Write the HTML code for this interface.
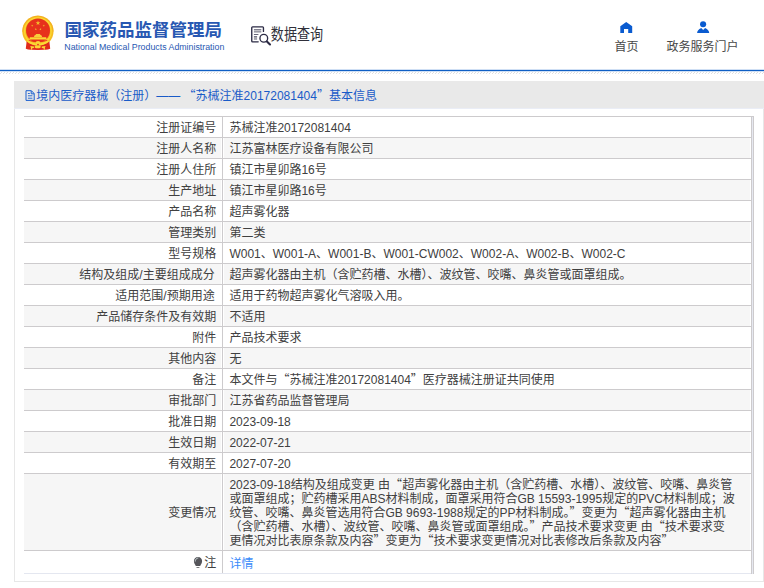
<!DOCTYPE html>
<html lang="zh-CN">
<head>
<meta charset="utf-8">
<title>国家药品监督管理局 - 数据查询</title>
<style>
html,body{margin:0;padding:0;background:#fff}
body{position:relative;width:764px;height:588px;overflow:hidden;font-family:"Liberation Sans",sans-serif;font-size:12px;line-height:14px;color:#333}
div,span,a,h1,h2,p,svg{position:absolute;box-sizing:border-box;display:block;margin:0;padding:0}
.t{color:transparent;white-space:pre;overflow:hidden;font-size:12px;line-height:14px;font-weight:normal;text-decoration:none}
#hd{left:0;top:0;width:764px;height:69px;background:#fff}
#hd h1{left:64.5px;top:18px;width:158px;height:22px;font-size:18px;line-height:22px;font-weight:bold}
#hd p{left:64.3px;top:41px;width:160px;height:11px;font-size:9px;line-height:11px}
#hd .q{left:271px;top:24px;width:52px;height:19px;font-size:13px;line-height:19px}
#hd .n1{left:614px;top:39px;width:24px;height:14px}
#hd .n2{left:666px;top:39px;width:72px;height:14px}
.hl1{left:0;top:69px;width:764px;height:3px;background:linear-gradient(#cfdff4 0,#cfdff4 1px,#0f5fc4 1px,#0f5fc4 2px,#d0e0f4 2px,#d0e0f4 3px)}
.hatch{left:0;top:72px;width:764px;height:2px;background:repeating-linear-gradient(135deg,#fff 0,#fff 1.4px,#e0e0e0 1.4px,#e0e0e0 2.12px)}
.bar{left:14px;top:81px;width:750px;height:28px;background:#e9e9e9;border-bottom:1px solid #eaedf6}
.bar h2{left:22px;top:8px;width:346px;height:14px}
.box{left:14px;top:109px;width:750px;height:473px;background:#fff;border:1px solid #e7e7e7;border-top:0}
.tb{left:24px;top:116px;width:730px;height:458px;background:#fff}
.r{left:0;width:728px;height:21px;border-top:1px solid #cdcbcd;background:linear-gradient(90deg,#fff 0,#fff 198px,#cdcbcd 198px,#cdcbcd 199px,#fff 199px)}
.r.g{background:linear-gradient(90deg,#f6f6f6 0,#f6f6f6 197px,#fff 197px,#fff 198px,#cdcbcd 198px,#cdcbcd 199px,#fff 199px,#fff 200px,#f6f6f6 200px,#f6f6f6 726px,#fff 726px)}
.l{left:0;top:3px;width:193px;text-align:right}
.v{left:205px;top:3px;width:520px}
.e1{left:727px;top:0;width:1px;height:458px;background:#cdcbcd}
.e2{left:728px;top:1px;width:1px;height:457px;background:#e6e8f0}
.e3{left:729px;top:0;width:1px;height:458px;background:#cdcbcd}
.top{left:0;top:0;width:730px;height:1px;background:#cdcbcd}
.bot{left:0;top:457px;width:728px;height:1px;background:#e4e7f0}
#ink{left:0;top:0;pointer-events:none}
</style>
</head>
<body>
<div id="hd">
<h1 class="t">国家药品监督管理局</h1>
<p class="t">National Medical Products Administration</p>
<a class="t q">数据查询</a>
<a class="t n1">首页</a>
<a class="t n2">政务服务门户</a>
</div>
<div class="hl1"></div>
<div class="hatch"></div>
<div class="bar"><h2 class="t">境内医疗器械（注册）—— “苏械注准20172081404”基本信息</h2></div>
<div class="box"></div>
<div class="tb">
<div class="r" style="top:0px;height:21px"><span class="t l" style="top:3px">注册证编号</span><span class="t v">苏械注准20172081404</span></div>
<div class="r g" style="top:21px;height:21px"><span class="t l" style="top:3px">注册人名称</span><span class="t v">江苏富林医疗设备有限公司</span></div>
<div class="r" style="top:42px;height:21px"><span class="t l" style="top:3px">注册人住所</span><span class="t v">镇江市星卯路16号</span></div>
<div class="r g" style="top:63px;height:21px"><span class="t l" style="top:3px">生产地址</span><span class="t v">镇江市星卯路16号</span></div>
<div class="r" style="top:84px;height:21px"><span class="t l" style="top:3px">产品名称</span><span class="t v">超声雾化器</span></div>
<div class="r g" style="top:105px;height:21px"><span class="t l" style="top:3px">管理类别</span><span class="t v">第二类</span></div>
<div class="r" style="top:126px;height:21px"><span class="t l" style="top:3px">型号规格</span><span class="t v">W001、W001-A、W001-B、W001-CW002、W002-A、W002-B、W002-C</span></div>
<div class="r g" style="top:147px;height:21px"><span class="t l" style="top:3px">结构及组成/主要组成成分</span><span class="t v">超声雾化器由主机（含贮药槽、水槽）、波纹管、咬嘴、鼻炎管或面罩组成。</span></div>
<div class="r" style="top:168px;height:21px"><span class="t l" style="top:3px">适用范围/预期用途</span><span class="t v">适用于药物超声雾化气溶吸入用。</span></div>
<div class="r g" style="top:189px;height:21px"><span class="t l" style="top:3px">产品储存条件及有效期</span><span class="t v">不适用</span></div>
<div class="r" style="top:210px;height:21px"><span class="t l" style="top:3px">附件</span><span class="t v">产品技术要求</span></div>
<div class="r g" style="top:231px;height:21px"><span class="t l" style="top:3px">其他内容</span><span class="t v">无</span></div>
<div class="r" style="top:252px;height:21px"><span class="t l" style="top:3px">备注</span><span class="t v">本文件与“苏械注准20172081404”医疗器械注册证共同使用</span></div>
<div class="r g" style="top:273px;height:21px"><span class="t l" style="top:3px">审批部门</span><span class="t v">江苏省药品监督管理局</span></div>
<div class="r" style="top:294px;height:21px"><span class="t l" style="top:3px">批准日期</span><span class="t v">2023-09-18</span></div>
<div class="r g" style="top:315px;height:21px"><span class="t l" style="top:3px">生效日期</span><span class="t v">2022-07-21</span></div>
<div class="r" style="top:336px;height:21px"><span class="t l" style="top:3px">有效期至</span><span class="t v">2027-07-20</span></div>
<div class="r g" style="top:357px;height:77px"><span class="t l" style="top:31px">变更情况</span><span class="t v">2023-09-18结构及组成变更 由“超声雾化器由主机（含贮药槽、水槽）、波纹管、咬嘴、鼻炎管<br>或面罩组成；贮药槽采用ABS材料制成，面罩采用符合GB 15593-1995规定的PVC材料制成；波<br>纹管、咬嘴、鼻炎管选用符合GB 9693-1988规定的PP材料制成。”变更为“超声雾化器由主机<br>（含贮药槽、水槽）、波纹管、咬嘴、鼻炎管或面罩组成。”产品技术要求变更 由“技术要求变<br>更情况对比表原条款及内容”变更为“技术要求变更情况对比表修改后条款及内容”</span></div>
<div class="r" style="top:434px;height:23px"><span class="t l" style="top:4px">注</span><a class="t v" style="top:4px">详情</a></div>
<div class="top"></div><div class="bot"></div>
<div class="e1"></div><div class="e2"></div><div class="e3"></div>
</div>
<svg id="ink" width="764" height="588" viewBox="0 0 764 588">
<defs>
<filter id="soft" x="-10%" y="-10%" width="120%" height="120%"><feGaussianBlur stdDeviation="0.35"/></filter>
</defs>
<g id="emblem" filter="url(#soft)">
<circle cx="37.9" cy="31.3" r="15.65" fill="#f6bd22"/>
<circle cx="37.9" cy="31.1" r="13.3" fill="none" stroke="#fbd935" stroke-width="1.2"/>
<path d="M22.5 31.3 A15.4 15.4 0 0 1 53.3 31.3" fill="none" stroke="#f0a21a" stroke-width="0.7" opacity="0.75"/>
<circle cx="38" cy="30.6" r="12.0" fill="#e7331f"/>
<g fill="#fbd935">
<g fill="#f3c02c"><polygon points="38.00,20.50 38.59,22.19 40.38,22.23 38.95,23.31 39.47,25.02 38.00,24.00 36.53,25.02 37.05,23.31 35.62,22.23 37.41,22.19"/>
<polygon points="32.78,24.70 32.62,25.51 33.32,25.94 32.51,26.04 32.32,26.84 31.97,26.10 31.15,26.17 31.75,25.60 31.43,24.85 32.15,25.24"/>
<polygon points="43.22,24.70 43.85,25.24 44.57,24.85 44.25,25.60 44.85,26.17 44.03,26.10 43.68,26.84 43.49,26.04 42.68,25.94 43.38,25.51"/>
<polygon points="36.00,28.07 36.13,28.88 36.94,29.04 36.21,29.42 36.30,30.23 35.72,29.65 34.97,30.00 35.34,29.26 34.78,28.66 35.60,28.79"/>
<polygon points="40.20,28.07 40.60,28.79 41.42,28.66 40.86,29.26 41.23,30.00 40.48,29.65 39.90,30.23 39.99,29.42 39.26,29.04 40.07,28.88"/></g>
<path d="M33.9 36.9 L34.4 35.4 L35.7 34.8 L36.1 34 L39.9 34 L40.3 34.8 L41.6 35.4 L42.1 36.9Z" fill="#f7cf3a"/>
<path d="M29.3 39.6 L29.9 37.3 L46.1 37.3 L46.7 39.6Z"/>
</g>
<path d="M28.2 39.9 Q38 41.6 47.8 39.9 L47.2 41 Q38 42.9 28.8 41Z" fill="#e7331f"/>
<path d="M26.6 41.4 Q31.5 45.2 38 45.2 Q44.5 45.2 49.4 41.4 L50.2 48.7 Q47.5 50.1 44 49.7 L38 49.9 L32 49.7 Q28.5 50.1 25.8 48.7Z" fill="#e02a1c"/>
<path d="M27.6 40.9 Q38 49.3 48.4 40.9" fill="none" stroke="#fbd935" stroke-width="1.5"/>
<g fill="#fbd935">
<ellipse cx="38" cy="42.6" rx="2.4" ry="1.7"/>
<ellipse cx="37.7" cy="46.7" rx="3" ry="1.5"/>
<path d="M30.2 46 L33.9 46.6 L34.2 47.8 L32 48.5 L31.9 49.8 L31 49.8 L30.9 47.8Z"/>
<path d="M45.6 46 L41.9 46.6 L41.6 47.8 L43.8 48.5 L43.9 49.8 L44.8 49.8 L44.9 47.8Z"/>
</g>
<circle cx="38" cy="44.55" r="0.9" fill="#e7331f"/>
</g>
<g id="query" fill="none" stroke="#2b2a44" stroke-width="1.35" stroke-linecap="round" stroke-linejoin="round">
<path d="M258.2 41.85 H252.6 Q251.75 41.85 251.75 41 V27.7 Q251.75 26.85 252.6 26.85 H262.6 Q263.45 26.85 263.45 27.7 V31.4"/>
<g stroke="none">
<rect x="253.9" y="29.1" width="7.4" height="0.8" fill="#2b2a44" opacity="0.75"/>
<rect x="253.9" y="30.4" width="7.4" height="2.2" fill="#9a9aa5"/>
<rect x="253.9" y="34.0" width="4.5" height="0.9" fill="#2b2a44" opacity="0.8"/>
<rect x="253.9" y="36.1" width="3.2" height="0.9" fill="#2b2a44" opacity="0.7"/>
<rect x="253.9" y="37.0" width="3.2" height="2.9" fill="#a5a5ae"/>
</g>
<circle cx="263.8" cy="38.2" r="3.85"/>
<path d="M266.9 41.4 L270 44.4" stroke-width="2.1"/>
</g>
<path id="home" d="M626.2 21.9 L632.2 26.3 V32.9 H628.2 V29 H624 V32.9 H620.3 V26.3Z" fill="#0a5bd0"/>
<g id="person" fill="#0a5bd0">
<circle cx="703.1" cy="24.2" r="3.05"/>
<path d="M697.1 33 Q697.2 29.6 701.2 27.9 L703.15 29.9 L705.1 27.9 Q709.1 29.6 709.2 33Z"/>
</g>
<g id="docicon" fill="none" stroke="#1a5fce" stroke-width="1">
<path d="M26 90.7 H31.4 L34.2 93.6 V100.4 H26Z"/>
<path d="M31.2 90.9 V93.8 H34"/>
<path d="M27.9 93.5 H29.8 M27.9 95.8 H32.4 M27.9 98.2 H32.4" stroke-width="0.9"/>
</g>
<g id="bulb">
<path d="M198 556.9 C200.5 556.9 202.1 558.7 202.1 561 C202.1 563.2 200.9 564.3 200.2 566 H195.8 C195.1 564.3 193.9 563.2 193.9 561 C193.9 558.7 195.5 556.9 198 556.9Z" fill="#55555a"/>
<path d="M195.2 561.2 C195.2 559.4 196.4 558.2 198 558" fill="none" stroke="#d8e4e6" stroke-width="0.8" stroke-linecap="round"/>
<rect x="196.5" y="567.1" width="2.9" height="0.9" fill="#6a6a6e"/>
</g>
<g font-family='"Liberation Sans", "Noto Sans CJK SC", sans-serif' font-size="12" fill="#404040">
<text x="156.35" y="132.3">注册证编号</text>
<text x="229.4" y="132.3">苏械注准20172081404</text>
<text x="156.35" y="153.3">注册人名称</text>
<text x="229.4" y="153.3">江苏富林医疗设备有限公司</text>
<text x="156.35" y="174.3">注册人住所</text>
<text x="229.4" y="174.3">镇江市星卯路16号</text>
<text x="168.35" y="195.3">生产地址</text>
<text x="229.4" y="195.3">镇江市星卯路16号</text>
<text x="168.35" y="216.3">产品名称</text>
<text x="229.4" y="216.3">超声雾化器</text>
<text x="168.35" y="237.3">管理类别</text>
<text x="229.4" y="237.3">第二类</text>
<text x="168.35" y="258.3">型号规格</text>
<text x="229.4" y="258.3">W001、W001-A、W001-B、W001-CW002、W002-A、W002-B、W002-C</text>
<text x="79.35" y="279.3">结构及组成/主要组成成分</text>
<text x="229.4" y="279.3">超声雾化器由主机（含贮药槽、水槽）、波纹管、咬嘴、鼻炎管或面罩组成。</text>
<text x="115.35" y="300.3">适用范围/预期用途</text>
<text x="229.4" y="300.3">适用于药物超声雾化气溶吸入用。</text>
<text x="96.35" y="321.3">产品储存条件及有效期</text>
<text x="229.4" y="321.3">不适用</text>
<text x="192.35" y="342.3">附件</text>
<text x="229.4" y="342.3">产品技术要求</text>
<text x="168.35" y="363.3">其他内容</text>
<text x="229.4" y="363.3">无</text>
<text x="192.35" y="384.3">备注</text>
<text x="229.4" y="384.3">本文件与<tspan font-family='"Noto Sans CJK SC", sans-serif'>“</tspan>苏械注准20172081404<tspan font-family='"Noto Sans CJK SC", sans-serif'>”</tspan>医疗器械注册证共同使用</text>
<text x="168.35" y="405.3">审批部门</text>
<text x="229.4" y="405.3">江苏省药品监督管理局</text>
<text x="168.35" y="426.3">批准日期</text>
<text x="229.4" y="426.3">2023-09-18</text>
<text x="168.35" y="447.3">生效日期</text>
<text x="229.4" y="447.3">2022-07-21</text>
<text x="168.35" y="468.3">有效期至</text>
<text x="229.4" y="468.3">2027-07-20</text>
<text x="168.35" y="517.3">变更情况</text>
<text x="229.4" y="489.3">2023-09-18结构及组成变更 由<tspan font-family='"Noto Sans CJK SC", sans-serif'>“</tspan>超声雾化器由主机（含贮药槽、水槽）、波纹管、咬嘴、鼻炎管</text>
<text x="229.4" y="503.3">或面罩组成；贮药槽采用ABS材料制成，面罩采用符合GB 15593-1995规定的PVC材料制成；波</text>
<text x="229.4" y="517.3">纹管、咬嘴、鼻炎管选用符合GB 9693-1988规定的PP材料制成。<tspan font-family='"Noto Sans CJK SC", sans-serif'>”</tspan>变更为<tspan font-family='"Noto Sans CJK SC", sans-serif'>“</tspan>超声雾化器由主机</text>
<text x="229.4" y="531.3">（含贮药槽、水槽）、波纹管、咬嘴、鼻炎管或面罩组成。<tspan font-family='"Noto Sans CJK SC", sans-serif'>”</tspan>产品技术要求变更 由<tspan font-family='"Noto Sans CJK SC", sans-serif'>“</tspan>技术要求变</text>
<text x="229.4" y="545.3">更情况对比表原条款及内容<tspan font-family='"Noto Sans CJK SC", sans-serif'>”</tspan>变更为<tspan font-family='"Noto Sans CJK SC", sans-serif'>“</tspan>技术要求变更情况对比表修改后条款及内容<tspan font-family='"Noto Sans CJK SC", sans-serif'>”</tspan></text>
<text x="204.25" y="567.3">注</text>
<text x="229.4" y="568.4" fill="#3a8bfa">详情</text>
<text x="36.2" y="100.25" fill="#195bc8">境内医疗器械（注册）—— <tspan font-family='"Noto Sans CJK SC", sans-serif'>“</tspan>苏械注准20172081404<tspan font-family='"Noto Sans CJK SC", sans-serif'>”</tspan>基本信息</text>
<text x="64.5" y="35.75" font-size="17.5" font-weight="bold" fill="#2858b2">国家药品监督管理局</text>
<text x="64.3" y="49.5" font-size="9.2" fill="#2858b2" textLength="160" lengthAdjust="spacingAndGlyphs">National Medical Products Administration</text>
<text transform="translate(270.8,39.85) scale(0.84,1)" x="0" y="0" font-size="15.6" fill="#30303a">数据查询</text>
<text x="614.4" y="51.2" fill="#484848">首页</text>
<text x="666.5" y="51.2" fill="#484848">政务服务门户</text>
</g>
</svg>
</body>
</html>
